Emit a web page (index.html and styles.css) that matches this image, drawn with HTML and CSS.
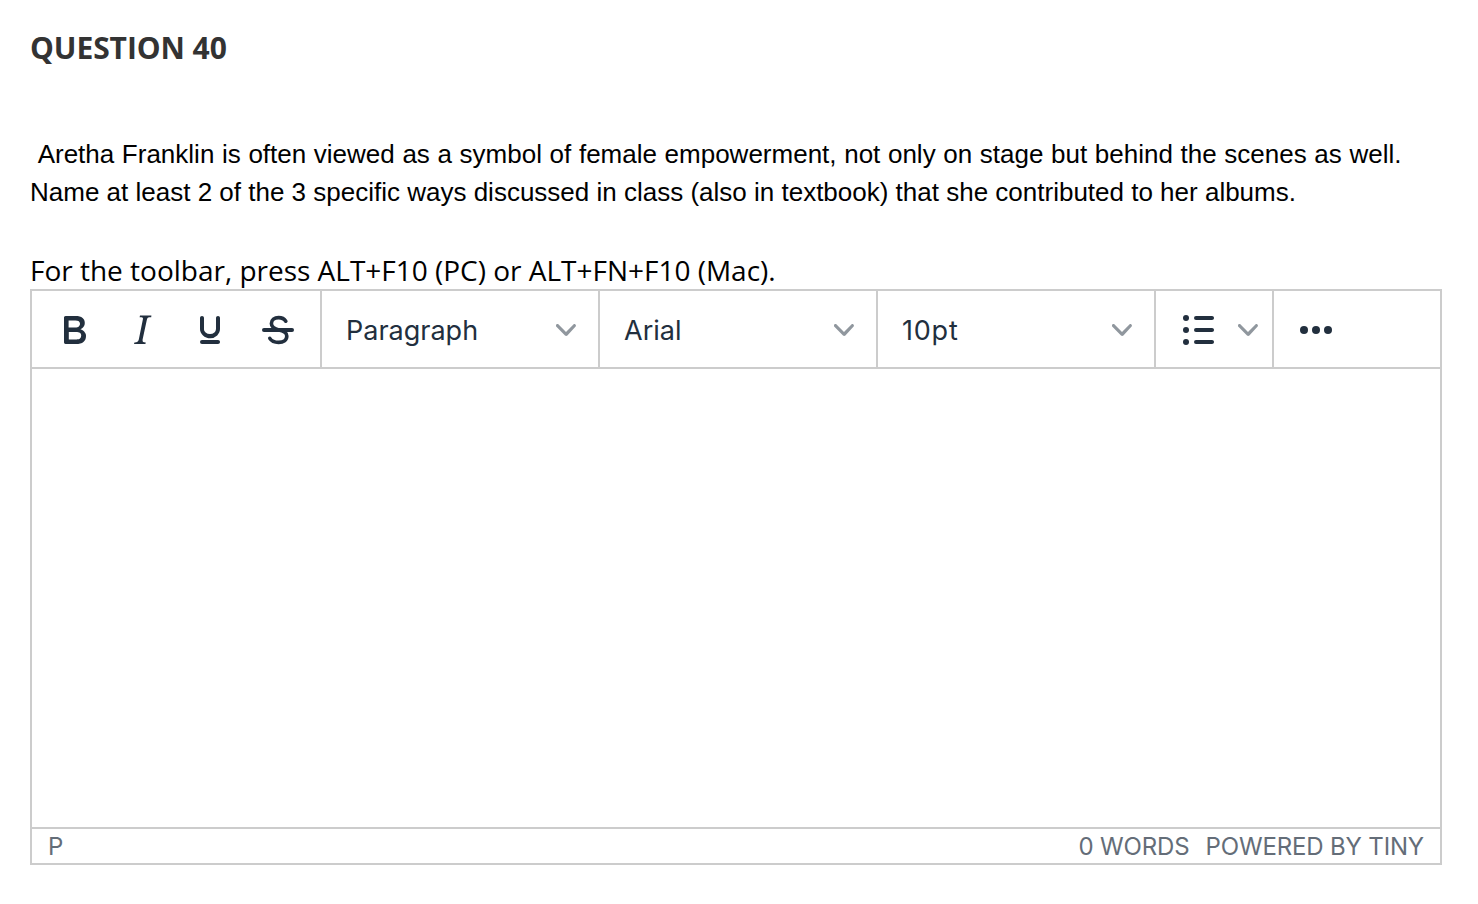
FILE: index.html
```html
<!DOCTYPE html>
<html lang="en">
<head>
<meta charset="utf-8">
<title>Question 40</title>
<link rel="stylesheet" href="styles.css">
</head>
<body>
<main class="page">
<h1 class="title">QUESTION 40</h1>
<p class="prompt"><span class="line first">&nbsp;Aretha Franklin is often viewed as a symbol of female empowerment, not only on stage but behind the scenes as well.</span><span class="line">Name at least 2 of the 3 specific ways discussed in class (also in textbook) that she contributed to her albums.</span></p>
<p class="hint">For the toolbar, press ALT+F10 (PC) or ALT+FN+F10 (Mac).</p>
<section class="editor">
<div class="toolbar">
<div class="group styles">
<svg class="icon" viewBox="0 0 24 24"><path fill-rule="evenodd" d="M7.8 19c-.3 0-.5 0-.6-.2l-.2-.5V5.7c0-.2 0-.4.2-.5l.6-.2h5c1.5 0 2.7.3 3.5 1 .7.6 1.1 1.4 1.1 2.5a3 3 0 0 1-.6 1.9c-.4.6-1 1-1.6 1.2.4.1.9.3 1.3.6s.8.7 1 1.2c.4.4.5 1 .5 1.6 0 1.3-.4 2.3-1.3 3-.8.7-2.1 1-3.8 1H7.8zm5-8.3c.6 0 1.2-.1 1.6-.5.4-.3.6-.7.6-1.3 0-1.1-.8-1.7-2.3-1.7H9.3v3.5h3.4zm.5 6c.7 0 1.3-.1 1.7-.4.4-.4.6-.9.6-1.5s-.2-1-.7-1.4c-.4-.3-1-.4-2-.4H9.4v3.8h4z"/></svg>
<svg class="icon" viewBox="0 0 24 24"><path fill-rule="evenodd" d="M16.7 4.7l-.1.9h-.3c-.6 0-1 0-1.4.3-.3.3-.4.6-.5 1.1l-2.1 9.8v.6c0 .5.4.8 1.4.8h.2l-.2.8H8l.2-.8h.2c1.1 0 1.8-.5 2-1.5l2-9.8.1-.5c0-.6-.4-.8-1.4-.8h-.3l.2-.9h5.8z"/></svg>
<svg class="icon" viewBox="0 0 24 24"><path d="M16 5c.6 0 1 .4 1 1v5.5a4 4 0 0 1-.4 1.8l-1 1.4a5.3 5.3 0 0 1-5.5 1 5 5 0 0 1-1.6-1c-.5-.4-.8-.9-1.1-1.4a4 4 0 0 1-.4-1.8V6c0-.6.4-1 1-1s1 .4 1 1v5.5c0 .3 0 .6.2 1l.6.7a3.3 3.3 0 0 0 2.2.8 3.4 3.4 0 0 0 2.2-.8c.3-.2.4-.5.6-.8l.2-.9V6c0-.6.4-1 1-1zM8 17h8c.6 0 1 .4 1 1s-.4 1-1 1H8a1 1 0 0 1 0-2z"/></svg>
<svg class="icon" viewBox="0 0 24 24"><path class="curve" d="M15.9 7.6C15.2 6.5 14 5.8 12.3 5.8 10.2 5.8 8.7 6.9 8.7 8.8c0 2 1.7 2.7 3.7 3.2 2.2.4 4 1.1 4 3 0 2.1-1.7 3.2-4.1 3.2-2 0-3.6-.7-4.4-2"/><path d="M5 11h14a1 1 0 0 1 0 2H5a1 1 0 0 1 0-2z"/></svg>
</div>
<div class="group select"><span class="label paragraph">Paragraph</span><svg class="chevron" viewBox="0 0 10 10"><path d="M8.7 2.2c.3-.3.8-.3 1 0 .4.4.4.9 0 1.2L5.7 7.8c-.3.3-.9.3-1.2 0L.2 3.4a.8.8 0 0 1 0-1.2c.3-.3.8-.3 1.1 0L5 6l3.7-3.8z"/></svg></div>
<div class="group select"><span class="label">Arial</span><svg class="chevron" viewBox="0 0 10 10"><path d="M8.7 2.2c.3-.3.8-.3 1 0 .4.4.4.9 0 1.2L5.7 7.8c-.3.3-.9.3-1.2 0L.2 3.4a.8.8 0 0 1 0-1.2c.3-.3.8-.3 1.1 0L5 6l3.7-3.8z"/></svg></div>
<div class="group select"><span class="label size">10pt</span><svg class="chevron" viewBox="0 0 10 10"><path d="M8.7 2.2c.3-.3.8-.3 1 0 .4.4.4.9 0 1.2L5.7 7.8c-.3.3-.9.3-1.2 0L.2 3.4a.8.8 0 0 1 0-1.2c.3-.3.8-.3 1.1 0L5 6l3.7-3.8z"/></svg></div>
<div class="group list">
<svg class="icon" viewBox="0 0 24 24"><path d="M11 5h8c.6 0 1 .4 1 1s-.4 1-1 1h-8a1 1 0 0 1 0-2zm0 6h8c.6 0 1 .4 1 1s-.4 1-1 1h-8a1 1 0 0 1 0-2zm0 6h8c.6 0 1 .4 1 1s-.4 1-1 1h-8a1 1 0 0 1 0-2z"/><circle cx="6" cy="6" r="1.5"/><circle cx="6" cy="12" r="1.5"/><circle cx="6" cy="18" r="1.5"/></svg>
<svg class="chevron" viewBox="0 0 10 10"><path d="M8.7 2.2c.3-.3.8-.3 1 0 .4.4.4.9 0 1.2L5.7 7.8c-.3.3-.9.3-1.2 0L.2 3.4a.8.8 0 0 1 0-1.2c.3-.3.8-.3 1.1 0L5 6l3.7-3.8z"/></svg>
</div>
<div class="group more"><svg class="icon" viewBox="0 0 24 24"><circle cx="6" cy="12" r="2"/><circle cx="12" cy="12" r="2"/><circle cx="18" cy="12" r="2"/></svg></div>
</div>
<div class="content"></div>
<div class="status"><span>P</span><span class="words">0 WORDS</span><span class="brand">POWERED BY TINY</span></div>
</section>
</main>
</body>
</html>
```
FILE: styles.css
```css
* { box-sizing: border-box; }
body { margin: 0; background: #fff; color: #000; }
.page { width: 1478px; height: 904px; padding: 28px 36px 0 30px; }
.title { margin: 0; height: 107px; font: 700 30px/40px "Open Sans", sans-serif; letter-spacing: -.07px; color: #333; white-space: nowrap; }
.prompt { margin: 0; height: 115px; font: 26px/38px "Liberation Sans", Arial, sans-serif; }
.line { display: block; white-space: nowrap; }
.first { word-spacing: .41px; }
.hint { margin: 0; height: 39px; font: 28px/40px "Open Sans", sans-serif; letter-spacing: -.01px; white-space: nowrap; }
.editor { display: flex; flex-direction: column; width: 1412px; height: 576px; border: 2px solid #ccc; }
.toolbar { display: flex; height: 78px; border-bottom: 2px solid #ccc; }
.group { display: flex; align-items: center; padding-top: 2px; border-right: 2px solid #ccc; }
.icon { width: 48px; height: 48px; fill: #222f3e; flex: none; }
.curve { fill: none; stroke: #222f3e; stroke-width: 1.8; stroke-linecap: round; }
.styles { width: 290px; padding-left: 18px; gap: 20px; }
.select { width: 278px; padding: 2px 22px 0 24px; justify-content: space-between; }
.label { padding-top: 2px; font: 27px/40px Inter, sans-serif; color: #222f3e; }
.size { letter-spacing: .8px; }
.chevron { width: 20px; height: 20px; fill: #90979e; flex: none; }
.list { width: 118px; padding-left: 18px; gap: 16px; }
.more { padding-left: 18px; border: 0; }
.content { flex: 1; }
.status { display: flex; height: 36px; padding: 0 16px; border-top: 2px solid #ccc; font: 24px/36px Inter, sans-serif; letter-spacing: -.15px; color: #646d78; }
.words { margin-left: auto; }
.brand { margin-left: 16px; }
```
